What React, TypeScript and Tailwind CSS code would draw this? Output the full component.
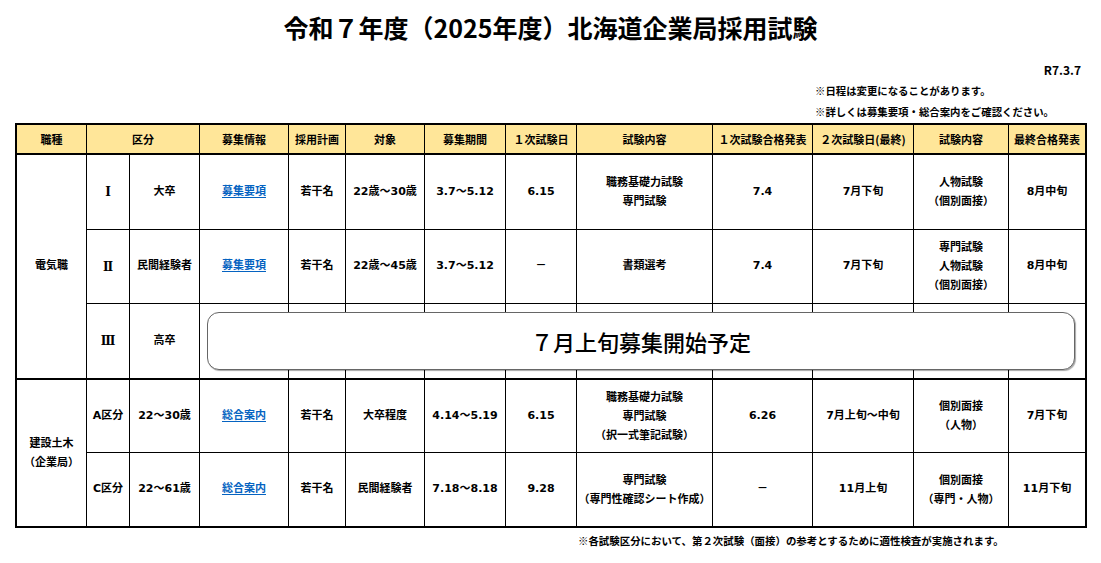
import React from "react";

const cell = "border-r border-b border-black text-center align-middle p-0";
const head = "border-r border-b-2 border-black bg-[#FFE699] text-center align-middle p-0";
const roman = "font-['DejaVu_Serif','Noto_Sans_CJK_JP',serif] text-[12px]";

function Link({ children }: { children: React.ReactNode }) {
  return <span className="text-[#0563C1] underline underline-offset-2">{children}</span>;
}

function Lines({ items }: { items: string[] }) {
  return (
    <div className="leading-[19px]">
      {items.map((t) => (
        <div key={t}>{t}</div>
      ))}
    </div>
  );
}

export default function App() {
  const headers = [
    "募集情報",
    "採用計画",
    "対象",
    "募集期間",
    "１次試験日",
    "試験内容",
    "１次試験合格発表",
    "２次試験日(最終)",
    "試験内容",
  ];

  return (
    <div className="w-[1101px] h-[563px] bg-white text-black font-['Noto_Sans_CJK_JP',sans-serif] font-bold">
      {/* Title */}
      <div className="h-[56px] flex items-center justify-center text-[25px]">
        令和７年度（2025年度）北海道企業局採用試験
      </div>

      <div className="h-[24px] pt-[4px] leading-[20px] text-[12px] text-right pr-[20px]">R7.3.7</div>

      {/* Notes */}
      <div className="pl-[815px] text-[10.4px] leading-[21px]">
        <div>※日程は変更になることがあります。</div>
        <div>※詳しくは募集要項・総合案内をご確認ください。</div>
      </div>

      {/* Table */}
      <div className="relative ml-[15px] mt-[1px] w-[1072px] border-2 border-black">
        <table className="table-fixed w-[1068px] border-separate border-spacing-0 text-[11px]">
          <colgroup>
            <col className="w-[70px]" />
            <col className="w-[43px]" />
            <col className="w-[70px]" />
            <col className="w-[89px]" />
            <col className="w-[57px]" />
            <col className="w-[79px]" />
            <col className="w-[81px]" />
            <col className="w-[71px]" />
            <col className="w-[136px]" />
            <col className="w-[100px]" />
            <col className="w-[101px]" />
            <col className="w-[95px]" />
            <col className="w-[76px]" />
          </colgroup>
          <thead>
            <tr className="h-[30px]">
              <th className={head}>職種</th>
              <th className={head} colSpan={2}>
                区分
              </th>
              {headers.map((h, i) => (
                <th key={i} className={head}>
                  {h}
                </th>
              ))}
              <th className="border-b-2 border-black bg-[#FFE699] text-center align-middle p-0">最終合格発表</th>
            </tr>
          </thead>
          <tbody className="font-['DejaVu_Sans','Noto_Sans_CJK_JP',sans-serif]">
            {/* 電気職 */}
            <tr className="h-[75px]">
              <td rowSpan={3} className="border-r border-b-2 border-black text-center align-middle p-0">
                電気職
              </td>
              <td className={`${cell} ${roman}`}>Ⅰ</td>
              <td className={cell}>大卒</td>
              <td className={cell}>
                <Link>募集要項</Link>
              </td>
              <td className={cell}>若干名</td>
              <td className={cell}>22歳～30歳</td>
              <td className={cell}>3.7～5.12</td>
              <td className={cell}>6.15</td>
              <td className={cell}>
                <Lines items={["職務基礎力試験", "専門試験"]} />
              </td>
              <td className={cell}>7.4</td>
              <td className={cell}>7月下旬</td>
              <td className={cell}>
                <Lines items={["人物試験", "（個別面接）"]} />
              </td>
              <td className="border-b border-black text-center align-middle p-0">8月中旬</td>
            </tr>
            <tr className="h-[74px]">
              <td className={`${cell} ${roman}`}>Ⅱ</td>
              <td className={cell}>民間経験者</td>
              <td className={cell}>
                <Link>募集要項</Link>
              </td>
              <td className={cell}>若干名</td>
              <td className={cell}>22歳～45歳</td>
              <td className={cell}>3.7～5.12</td>
              <td className={cell}>－</td>
              <td className={cell}>書類選考</td>
              <td className={cell}>7.4</td>
              <td className={cell}>7月下旬</td>
              <td className={cell}>
                <Lines items={["専門試験", "人物試験", "（個別面接）"]} />
              </td>
              <td className="border-b border-black text-center align-middle p-0">8月中旬</td>
            </tr>
            <tr className="h-[76px]">
              <td className={`border-r border-b-2 border-black text-center align-middle p-0 ${roman}`}>Ⅲ</td>
              <td className="border-r border-b-2 border-black text-center align-middle p-0">高卒</td>
              {Array.from({ length: 9 }).map((_, i) => (
                <td key={i} className="border-r border-b-2 border-black p-0" />
              ))}
              <td className="border-b-2 border-black p-0" />
            </tr>

            {/* 建設土木 */}
            <tr className="h-[73px]">
              <td rowSpan={2} className="border-r border-black text-center align-middle p-0">
                <Lines items={["建設土木", "（企業局）"]} />
              </td>
              <td className={cell}>A区分</td>
              <td className={cell}>22～30歳</td>
              <td className={cell}>
                <Link>総合案内</Link>
              </td>
              <td className={cell}>若干名</td>
              <td className={cell}>大卒程度</td>
              <td className={cell}>4.14～5.19</td>
              <td className={cell}>6.15</td>
              <td className={cell}>
                <Lines items={["職務基礎力試験", "専門試験", "（択一式筆記試験）"]} />
              </td>
              <td className={cell}>6.26</td>
              <td className={cell}>7月上旬～中旬</td>
              <td className={cell}>
                <Lines items={["個別面接", "（人物）"]} />
              </td>
              <td className="border-b border-black text-center align-middle p-0">7月下旬</td>
            </tr>
            <tr className="h-[73px]">
              <td className="border-r border-black text-center align-middle p-0">C区分</td>
              <td className="border-r border-black text-center align-middle p-0">22～61歳</td>
              <td className="border-r border-black text-center align-middle p-0">
                <Link>総合案内</Link>
              </td>
              <td className="border-r border-black text-center align-middle p-0">若干名</td>
              <td className="border-r border-black text-center align-middle p-0">民間経験者</td>
              <td className="border-r border-black text-center align-middle p-0">7.18～8.18</td>
              <td className="border-r border-black text-center align-middle p-0">9.28</td>
              <td className="border-r border-black text-center align-middle p-0">
                <Lines items={["専門試験", "（専門性確認シート作成）"]} />
              </td>
              <td className="border-r border-black text-center align-middle p-0">－</td>
              <td className="border-r border-black text-center align-middle p-0">11月上旬</td>
              <td className="border-r border-black text-center align-middle p-0">
                <Lines items={["個別面接", "（専門・人物）"]} />
              </td>
              <td className="text-center align-middle p-0">11月下旬</td>
            </tr>
          </tbody>
        </table>

        {/* 高卒 overlay */}
        <div className="absolute left-[190px] top-[187px] w-[868px] h-[58px] bg-white border-[1.5px] border-[#666] rounded-[12px] shadow-[1px_1px_1px_rgba(0,0,0,0.35)] flex items-center justify-center text-[22px] font-medium font-['Noto_Sans_CJK_JP',sans-serif]">
          ７月上旬募集開始予定
        </div>
      </div>

      <div className="pl-[578px] mt-[3px] text-[10.45px] leading-[20px]">
        ※各試験区分において、第２次試験（面接）の参考とするために適性検査が実施されます。
      </div>
    </div>
  );
}
